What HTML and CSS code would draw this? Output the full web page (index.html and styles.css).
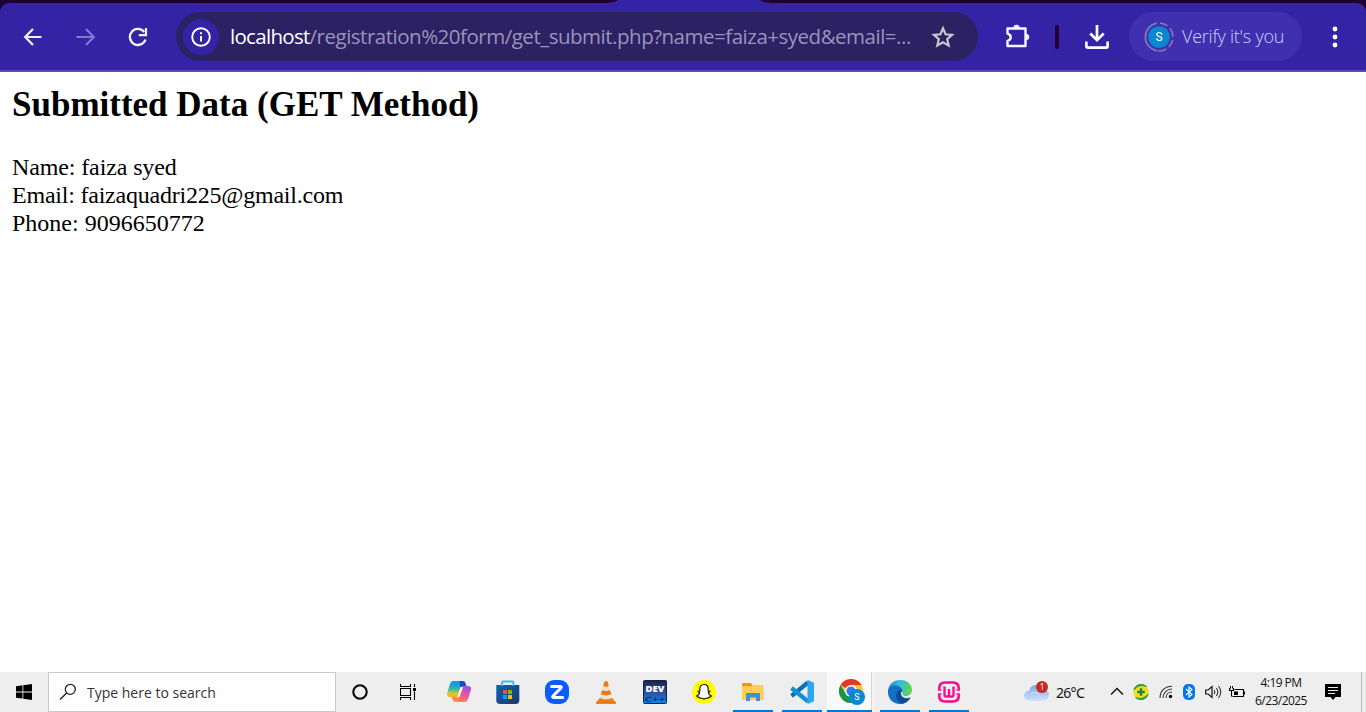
FILE: index.html
```html
<!DOCTYPE html>
<html lang="en">
<head>
<meta charset="utf-8">
<title>Submitted Data</title>
<link rel="stylesheet" href="styles.css">
</head>
<body>
<header class="chrome">
  <div class="tabs"><div class="tab"></div></div>
  <div class="toolbar">
    <svg class="back" width="20" height="20" viewBox="0 0 20 20"><path d="M18.500 10H2.500M10 2L2.200 10l7.800 8" fill="none" stroke="#f4f2fb" stroke-width="2.200"/></svg>
    <svg class="forward" width="20" height="20" viewBox="0 0 20 20"><path d="M.5 10h17M10 2l7.800 8-7.800 8" fill="none" stroke="#8479cb" stroke-width="2.200"/></svg>
    <svg class="reload" width="20" height="20" viewBox="0 0 20 20"><path d="M17.500 12.500A8 8 0 1 1 16.200 5" fill="none" stroke="#f4f2fb" stroke-width="2.300"/><path d="M18 1v7.200h-7.200" fill="none" stroke="#f4f2fb" stroke-width="2.200"/></svg>
    <div class="address">
      <span class="info"><svg width="20" height="20" viewBox="0 0 20 20"><circle cx="10" cy="10" r="8.800" fill="none" stroke="#fff" stroke-width="1.900"/><path d="M10 9v5.500M10 5.200v2.100" stroke="#fff" stroke-width="2"/></svg></span>
      <span class="url"><span class="host">localhost</span><span class="path">/registration%20form/get_submit.php?name=faiza+syed&amp;email=...</span></span>
      <svg class="star" width="24" height="24" viewBox="0 0 24 24"><path d="M12 3.300l2.600 6 6.500.6-4.900 4.300 1.500 6.400-5.700-3.400-5.700 3.400 1.500-6.400-4.900-4.300 6.500-.6z" fill="none" stroke="#c9c7c7" stroke-width="2.200"/></svg>
    </div>
    <svg class="puzzle" width="26" height="26" viewBox="0 0 26 26"><path d="M3.500 4.500h18v17.500h-18v-5.200c4.300-1 4.300-6.200 0-7.200z" fill="none" stroke="#f7f6fd" stroke-width="2.400" stroke-linejoin="round"/><path d="M9.500 4a3 3 0 0 1 6 0zM22 10a3 3 0 0 1 0 6z" fill="#f7f6fd" stroke="#f7f6fd" stroke-width=".6"/></svg>
    <span class="divider"></span>
    <svg class="download" width="24" height="24" viewBox="0 0 24 24"><path d="M12 0v15M5.300 8.500l6.700 6.700 6.700-6.700" fill="none" stroke="#fff" stroke-width="2.700"/><path d="M1.400 16.500v4.700q0 1.400 1.400 1.400h18.400q1.400 0 1.400-1.400v-4.700" fill="none" stroke="#fff" stroke-width="2.600"/></svg>
    <div class="profile">
      <svg width="30" height="30" viewBox="0 0 30 30"><path d="M13 1.200A14 14 0 0 0 13 28.800" fill="none" stroke="#8077b7" stroke-width="1.700"/><circle cx="15" cy="15" r="14" fill="none" stroke="#8077b7" stroke-width="1.700" stroke-dasharray="8 3.500 9 3.500 8 3 9 100" transform="rotate(-86 15 15)"/><circle cx="15" cy="15" r="10.800" fill="#0788d1"/><text class="initial" x="15" y="19" text-anchor="middle">S</text></svg>
      <span class="verify">Verify it's you</span>
    </div>
    <svg class="menu" width="6" height="22" viewBox="0 0 6 22"><g fill="#fff"><circle cx="3" cy="3" r="2.400"/><circle cx="3" cy="11" r="2.400"/><circle cx="3" cy="19" r="2.400"/></g></svg>
  </div>
</header>
<main class="content">
  <h2 class="title">Submitted Data (GET Method)</h2>
  <div class="row name">Name: faiza syed</div>
  <div class="row email">Email: faizaquadri225@gmail.com</div>
  <div class="row phone">Phone: 9096650772</div>
</main>
<footer class="taskbar">
  <div class="start"><svg width="16" height="16" viewBox="0 0 16 16"><path d="M0 2.200L6.500 1.300V7.500H0zM7.300 1.200L16 0v7.500H7.300zM0 8.400h6.500v6.200L0 13.700zM7.300 8.400H16V16l-8.700-1.200z"/></svg></div>
  <div class="search"><svg width="18" height="18" viewBox="0 0 18 18"><circle cx="11.300" cy="6.300" r="5" fill="none" stroke="#222" stroke-width="1.300"/><path d="M7.700 9.900L1 16.600" stroke="#222" stroke-width="1.400"/></svg><span class="hint">Type here to search</span></div>
  <div class="slot narrow"><svg width="16" height="16" viewBox="0 0 16 16"><circle cx="8" cy="8" r="6.700" fill="none" stroke="#080808" stroke-width="2.100"/></svg></div>
  <div class="slot narrow"><svg width="16" height="16" viewBox="0 0 16 16"><path d="M.5 0v2.500h10V0M.5 16v-2.500h10V16M.5 4.500h10v7h-10zM14.500 0v3M14.500 7.500V16" fill="none" stroke="#000" stroke-width="1.100"/><path d="M13 4h3v3h-3z"/></svg></div>

  <div class="slot"><svg width="24" height="22" viewBox="0 0 24 22"><defs><linearGradient id="cpA" x1="0" y1="0" x2="0" y2="1"><stop stop-color="#168ef0"/><stop offset=".45" stop-color="#22b4b6"/><stop offset=".8" stop-color="#d9cf25"/><stop offset="1" stop-color="#f5b315"/></linearGradient><linearGradient id="cpB" x1="0.700" y1="0" x2=".2" y2="1"><stop stop-color="#a54cf0"/><stop offset=".5" stop-color="#f0578e"/><stop offset="1" stop-color="#ff9a3c"/></linearGradient></defs><path d="M14 0h2q2 0 2.700 3l.6 2h-3q-2 0-2.800 3L12 13q-.8 3-3.500 3H3q-4 0-2.800-4L3 3q1-3 3.500-3z" fill="url(#cpA)"/><path d="M10 21H8q-2 0-2.700-3l-.6-2h4q2 0 2.800-3L13 8q.8-3 3.500-3H21q4 0 2.800 4L21 18q-1 3-3.500 3z" fill="url(#cpB)"/><path d="M12.500 0H16q2 0 2.700 3l.6 2h-3q-2 0-2.800 3z" fill="#1750ba"/><path d="M13.500 6h2.500l-3 8.500q-.7 2-2.200 2H8.700q2-.5 2.600-3z" fill="#fff"/></svg></div>
  <div class="slot"><svg width="24" height="24" viewBox="0 0 24 24"><defs><linearGradient id="stA" x1="0" y1="0" x2="1" y2="1"><stop stop-color="#0d62b4"/><stop offset="1" stop-color="#213765"/></linearGradient></defs><path d="M.3 5h23v15.500q0 3.500-4 3.500h-15q-4 0-4-3.500z" fill="url(#stA)"/><path d="M6 6V2.500q0-1 1-1h9.400q1 0 1 1V6" fill="none" stroke="#30bdf0" stroke-width="1.800"/><path d="M7 10h4v4H7z" fill="#f25022"/><path d="M12 10h4v4h-4z" fill="#7fba00"/><path d="M7 15h4v4H7z" fill="#00a4ef"/><path d="M12 15h4v4h-4z" fill="#ffb900"/></svg></div>
  <div class="slot"><svg width="24" height="24" viewBox="0 0 24 24"><rect width="24" height="24" rx="9" fill="#0b5cff"/><path d="M6.500 6.500h8.700q2 0 .5 1.800L8.500 15.500q-2 2 .5 2h8.700" fill="none" stroke="#fff" stroke-width="3" stroke-linecap="round" stroke-linejoin="round"/></svg></div>
  <div class="slot"><svg width="20" height="24" viewBox="0 0 20 24"><path d="M3 18.500h14l3 5H0z" fill="#f18214"/><path d="M8.300 2q1.700-2 3.400 0L16.500 19q-6.500 3.500-13 0z" fill="#e4e4e4"/><path d="M8.300 2q1.700-2 3.400 0l1.100 4q-2.800 1.300-5.600 0zM6 10q4 1.800 8 0l1.200 4.300q-5.200 2.300-10.400 0zM3.800 18q6.200 2.800 12.400 0l.3 1.500q-6.500 3-13 0z" fill="#ef7a10"/><path d="M.5 21.500h19l.5 2.300H0z" fill="#e07a0c"/></svg></div>
  <div class="slot"><svg width="24" height="24" viewBox="0 0 24 24"><defs><linearGradient id="dv" x1="0" y1="0" x2="0" y2="1"><stop stop-color="#192344"/><stop offset=".45" stop-color="#2b4a95"/><stop offset="1" stop-color="#1485ed"/></linearGradient></defs><rect x=".5" y=".5" width="23" height="23" rx="1" fill="url(#dv)" stroke="#14223d"/><text class="dev" x="2.500" y="11.500" textLength="19" lengthAdjust="spacingAndGlyphs">DEV</text><text class="cpp" x="1.500" y="22" textLength="21" lengthAdjust="spacingAndGlyphs">C++</text></svg></div>
  <div class="slot"><svg width="24" height="24" viewBox="0 0 24 24"><circle cx="12" cy="12" r="12" fill="#fffc00"/><path d="M12 4.500c3 0 4.200 2 4.200 4.500v2l1.700.2-1.500 1.600c.4 1.800 1.300 2.500 2.900 3.200-.4 1.100-1.500 1.200-2.500 1.400-.4.900-1.200.6-2.200.6-1 0-1.400 1-2.600 1s-1.600-1-2.600-1-1.800.3-2.200-.6c-1-.2-2.100-.3-2.500-1.400 1.600-.7 2.500-1.400 2.900-3.200L6.100 11.200l1.700-.2V9c0-2.500 1.200-4.500 4.200-4.500z" fill="#fff" stroke="#111" stroke-width="1.200"/></svg></div>
  <div class="slot open"><svg width="22" height="20" viewBox="0 0 22 20"><path d="M0 3V2q0-1 1-1h8l2 2.500V7H0z" fill="#e19e10"/><path d="M0 4.300h9l2-1.300h10.500V18H0z" fill="#ffce52"/><path d="M4 19v-7q0-1 1-1h12q1 0 1 1v7h-4v-3.500H8V19z" fill="#3e91d4"/></svg></div>
  <div class="slot open"><svg width="24" height="24" viewBox="0 0 24 24"><path d="M1.500 16L18 2.500" stroke="#0b72b8" stroke-width="4.200"/><path d="M1.500 8L18 21.500" stroke="#148fd6" stroke-width="4.200"/><path d="M17.500 0L24 2.800v18.400L17.500 24z" fill="#2aa8ef"/></svg></div>
  <div class="slot open active"><svg width="26" height="26" viewBox="0 0 26 26"><circle cx="12" cy="12" r="12" fill="#fcc934"/><path d="M12 12L1.600 6A12 12 0 0 1 22.400 6H12z" fill="#e3372a"/><path d="M1.600 6A12 12 0 0 0 12 24l5.200-9L12 12 6.800 15z" fill="#189548"/><circle cx="12" cy="12" r="6" fill="#fff"/><circle cx="12" cy="12" r="4.600" fill="#3978e6"/><circle cx="18" cy="18" r="8" fill="#0788d1"/><text class="initial small" x="18" y="21.200" text-anchor="middle">S</text></svg></div>
  <div class="slot open"><svg width="24" height="24" viewBox="0 0 24 24"><defs><linearGradient id="edA" x1="0" y1="0" x2="1" y2=".2"><stop stop-color="#2382d4"/><stop offset=".5" stop-color="#31bdd8"/><stop offset="1" stop-color="#5bd657"/></linearGradient></defs><path d="M0 12C0 4 6 0 12 0c8 0 12 5 12 10 0 5-5 7-8 6s-2-2-2-4c0-3-3-4-6-4-5 0-8 4-8 7z" fill="url(#edA)"/><path d="M0 12c0-4 3-6.500 7-6.500 4 0 7.500 2.500 7.500 6-1 0-2 1-1.500 2.500 1 4 6 4.500 9.500 3C20.500 21.500 16 24 12 24 5 24 0 19 0 12z" fill="#1170c4"/><path d="M11 10.500c-5 3-3 12 4 13.200 3-.8 6-3.200 7.500-6-5 2.300-9 .5-9.800-2.700-.5-1.500 0-3 1.300-4-1-1.200-2-1-3-.5z" fill="#124994"/><path d="M14.500 11.500c-1.500 1.500-1.300 4 .8 5.500 2.500 1.500 5.700 1 8.200-.2l-.7-2.300c-2.300 2-6 2.200-7.600 1-1.300-1-.7-2.200-.7-4z" fill="#eee"/></svg></div>
  <div class="slot open"><svg width="24" height="24" viewBox="0 0 24 24"><path d="M2.200 9.500V8.500q0-6 6-6h7.600q6 0 6 6v1M2.200 14.500v1q0 6 6 6h7.600q6 0 6-6v-1" fill="none" stroke="#ff078d" stroke-width="2.600"/><path d="M7.500 6.500v8q0 2.200 2.250 2.200T12 14.500V9v5.500q0 2.200 2.250 2.200t2.250-2.200v-8" fill="none" stroke="#ff078d" stroke-width="2.300"/><path d="M1 10h3.500M1 14h3.500M19.500 10H23M19.500 14H23" stroke="#ff078d" stroke-width="1.400"/></svg></div>

  <svg class="weather" width="26" height="22" viewBox="0 0 26 22"><defs><linearGradient id="cl" x1="0" y1="0" x2="0" y2="1"><stop stop-color="#77a7ec"/><stop offset="1" stop-color="#d2e2fb"/></linearGradient></defs><path d="M5 20a5 5 0 0 1 0-10 7.500 7.500 0 0 1 14-2 6 6 0 0 1 0 12z" fill="url(#cl)"/><path d="M7 13c3-3 8-1 9 3" fill="none" stroke="#e6effd" stroke-width="1"/><circle cx="18" cy="6" r="6" fill="#c42b1c"/><text class="badge" x="18" y="9" text-anchor="middle">1</text></svg>
  <span class="temp">26°C</span>
  <svg class="chevron" width="14" height="10" viewBox="0 0 14 10"><path d="M1 7.500l6-6 6 6" fill="none" stroke="#151515" stroke-width="1.500"/></svg>
  <svg class="antivirus" width="16" height="16" viewBox="0 0 16 16"><circle cx="8" cy="8" r="7.700" fill="#f5dc20"/><path d="M.8 6A7.500 7.500 0 0 1 13.500 2.500Q6-.5.8 6zM15.200 10A7.500 7.500 0 0 1 2.500 13.500Q10 16.500 15.200 10z" fill="#2aa044" stroke="#2aa044"/><path d="M8 4.300v7.400M4.300 8h7.400" stroke="#16883a" stroke-width="2.300"/></svg>
  <svg class="wifi" width="14" height="14" viewBox="0 0 14 14"><g fill="none" stroke="#333" stroke-width="1.100"><path d="M1 13C1 6 6 1.200 13 1.200M4 13c0-5 4-9 9-9M7 13c0-3.500 2.500-6 6-6"/></g><circle cx="11.500" cy="11.500" r="1.700"/></svg>
  <svg class="bluetooth" width="12" height="16" viewBox="0 0 12 16"><rect width="12" height="16" rx="5" fill="#0078e8"/><path d="M3 5l6 5.500L6 13V3l3 2.500L3 11" fill="none" stroke="#fff" stroke-width="1.100"/></svg>
  <svg class="volume" width="17" height="14" viewBox="0 0 17 14"><path d="M.7 5h2.500L7 1.500v11L3.200 9H.7z" fill="none" stroke="#111" stroke-width="1.200"/><path d="M9 5q1.500 2 0 4M11.300 3q3 4 0 8M13.500 1q4.500 6 0 12" fill="none" stroke="#333" stroke-width="1.100"/></svg>
  <svg class="battery" width="16" height="12" viewBox="0 0 16 12"><path d="M5.500 3.500h9v7h-11M15.500 5.500v3M.5 2v2.500h4V2M2.500 4.500v6" fill="none" stroke="#000" stroke-width="1.100"/><path d="M1 0h1v2.500H1zM3 0h1v2.500H3zM5 5.500h4v3.500H5z"/></svg>
  <div class="clock"><span class="time">4:19 PM</span><span class="date">6/23/2025</span></div>
  <svg class="notes" width="16" height="16" viewBox="0 0 16 16"><path d="M0 0h16v13h-5.500L8 16l-2.500-3H0z"/><path d="M3 3.500h10M3 6.500h10M3 9.500h7" stroke="#eee"/></svg>
  <span class="peek"></span>
</footer>
</body>
</html>
```

FILE: styles.css
```css
* { box-sizing: border-box; }
body { margin: 0; width: 1366px; height: 712px; display: flex; flex-direction: column; background: #fff; overflow: hidden; }
svg { display: block; flex: none; }
span { white-space: nowrap; }
.chrome { height: 72px; flex: none; background: #1e0033; }
.tabs { height: 3px; display: flex; padding-left: 606px; }
.tab { width: 166px; background: #3523a6; clip-path: polygon(0 100%, 8px 67%, 12px 0, 154px 0, 158px 67%, 166px 100%); }
.toolbar { height: 69px; display: flex; align-items: center; background: #3523a6; border-bottom: 2px solid #604bb5; border-radius: 9px 9px 0 0; }
.back { margin-left: 23px; }
.forward { margin-left: 33px; }
.reload { margin-left: 32px; }
.address { width: 802px; height: 49px; margin-left: 28px; padding-left: 7px; display: flex; align-items: center; border-radius: 25px; background: #2c2162; }
.info { width: 36px; height: 36px; border-radius: 50%; background: #3523a6; display: grid; place-items: center; }
.url { width: 700px; margin: -2px 0 0 11px; font: 20.500px/30px "Open Sans", "Noto Sans", sans-serif; color: #9a94bb; }
.host { color: #fff; letter-spacing: -0.700px; }
.path { letter-spacing: -0.490px; }
.star { margin-left: 1px; }
.puzzle { margin-left: 26px; }
.divider { width: 4px; height: 24px; margin-left: 25px; border-radius: 2px; background: #1e0033; }
.download { margin-left: 26px; }
.profile { width: 173px; height: 49px; margin-left: 20px; padding-left: 15px; display: flex; align-items: center; border-radius: 25px; background: #402fae; }
.verify { margin: -1px 0 0 8px; font: 300 18px/26px "Open Sans", "Noto Sans", sans-serif; letter-spacing: -0.240px; color: #c3d5ff; }
.initial { font: 12px Roboto, sans-serif; fill: #fff; }
.small { font-size: 9px; }
.menu { margin-left: 30px; }
.content { flex: 1; padding: 13px 12px; color: #000; font: 24px/28px "Liberation Serif", serif; }
.title { margin: 0 0 28px; font-size: 35px; line-height: 40px; font-weight: 700; letter-spacing: 0; }
.row { height: 28px; white-space: nowrap; }
.name { letter-spacing: -0.120px; }
.email { letter-spacing: -0.220px; }
.taskbar { height: 40px; flex: none; display: flex; align-items: center; background: #eee; color: #111; font-family: "Open Sans", "Noto Sans", sans-serif; }
.start { width: 48px; display: grid; place-items: center; }
.search { width: 288px; height: 40px; padding-left: 10px; display: flex; align-items: center; background: #fff; border: 1px solid #c8c8c8; }
.hint { margin-left: 10px; font-size: 14px; letter-spacing: 0; color: #333; }
.slot { width: 49px; height: 40px; flex: none; display: grid; place-items: center; }
.narrow { width: 48px; }
.narrow + .slot:not(.narrow) { margin-left: 2px; }
.open { background: linear-gradient(#0078d7, #0078d7) center bottom / 40px 2px no-repeat; }
.active { padding-left: 3px; background: linear-gradient(#0078d7, #0078d7) 1px bottom / 45px 2px no-repeat, linear-gradient(90deg, #eee 1px, #f9f9f9 1px, #f9f9f9 45px, #d5d5d5 45px, #d5d5d5 46px, #f4f4f4 46px); }
.dev { font: 800 9px/9px "Open Sans", sans-serif; fill: #fff; }
.cpp { font: 700 7px/7px "Open Sans", sans-serif; fill: #103260; }
.weather { margin-left: 51px; }
.badge { font: 9px "Open Sans", sans-serif; fill: #fff; }
.temp { width: 54px; margin-left: 6px; font: 14px "Noto Sans", sans-serif; letter-spacing: -0.700px; }
.antivirus { margin-left: 9px; }
.wifi { margin-left: 10px; }
.bluetooth { margin-left: 10px; }
.volume { margin-left: 10px; }
.battery { margin-left: 7px; }
.clock { width: 70px; margin-left: 1px; display: flex; flex-direction: column; align-items: center; font-size: 12px; line-height: 18px; letter-spacing: -0.550px; }
.notes { margin-left: 9px; }
.peek { width: 1px; height: 40px; margin-left: 20px; background: #bbb; }
```
